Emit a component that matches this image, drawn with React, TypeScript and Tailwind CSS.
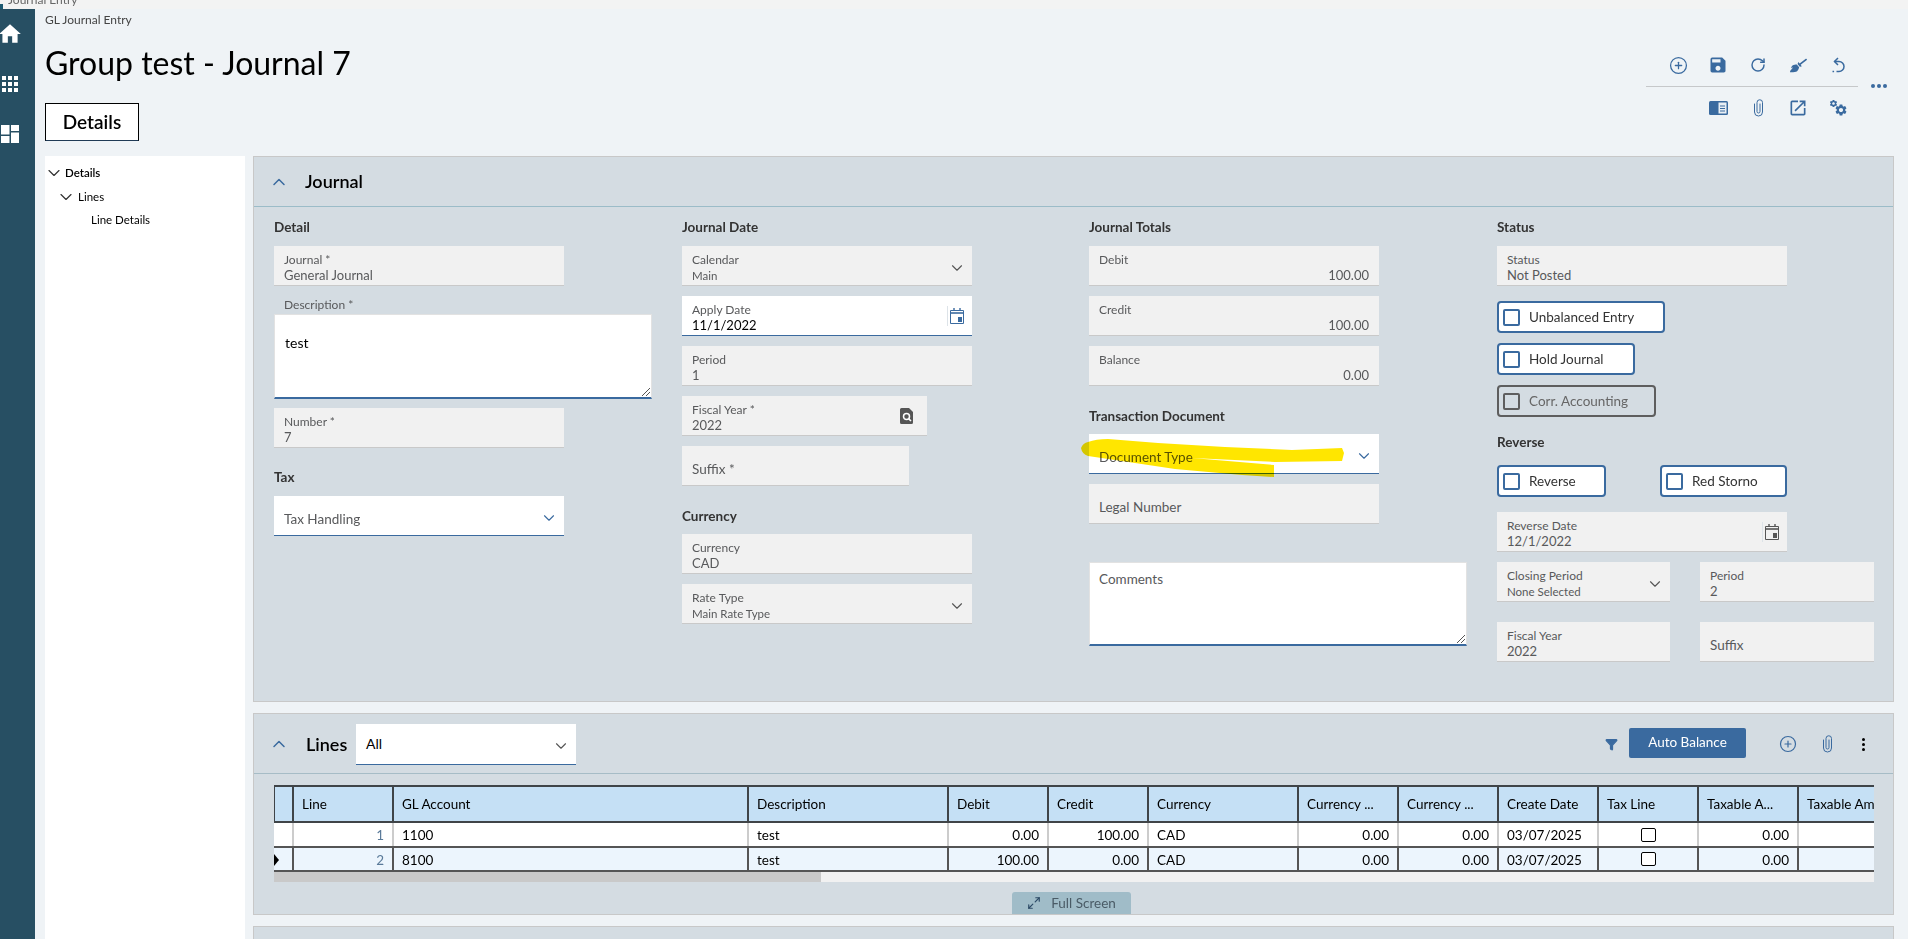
import React from "react";
import { ChevronDown, ChevronUp, CirclePlus, Filter, RotateCw, Maximize2 } from "lucide-react";
import { MdHome, MdSave, MdOpenInNew, MdSettings } from "react-icons/md";
import { FaBroom } from "react-icons/fa";

const BLUE = "#3a6a9f";

const Clip = ({ className = "" }: { className?: string }) => (
  <svg viewBox="0 0 10 18" className={className} fill="none" stroke={BLUE} strokeWidth="1" strokeLinecap="round">
    <path d="M6.5 5v7.5a1.5 1.5 0 0 1-3 0v-9a2.75 2.75 0 0 1 5.5 0V13a4 4 0 0 1-8 0V5" />
  </svg>
);

const Calendar = ({ color }: { color: string }) => (
  <svg viewBox="0 0 14 16" className="w-[14px] h-[16px]" fill="none" stroke={color}>
    <path d="M.5 2.5h13v13H.5z" strokeWidth="1" />
    <path d="M0 5h14" strokeWidth="1.6" />
    <path d="M4 0v3M10 0v3" strokeWidth="1.4" />
    <rect x="8" y="9" width="4" height="5" fill={color} stroke="none" />
  </svg>
);

const Field = ({
  label,
  value,
  width = "w-[290px]",
  active,
  chevron,
  right,
  numeric,
  small,
  children,
}: {
  label: string;
  value?: string;
  width?: string;
  active?: boolean;
  chevron?: boolean;
  right?: React.ReactNode;
  numeric?: boolean;
  small?: boolean;
  children?: React.ReactNode;
}) => (
  <div
    className={`relative h-[40px] shrink-0 px-[10px] ${width} ${
      active ? "bg-white border-b border-[#3a6a9f]" : "bg-[#f1f1f1] border-b border-[#c9c9c9]"
    }`}
  >
    {value !== undefined ? (
      <>
        <div className="text-[12px] leading-[14px] pt-[7px] box-content text-[#58595b]">{label}</div>
        <div
          className={`${small ? "text-[11.5px] mt-[1px]" : "text-[13px]"} leading-[16px] ${
            active ? "text-black" : "text-[#58595b]"
          } ${numeric ? "text-right" : ""}`}
        >
          {value}
        </div>
      </>
    ) : (
      <div className="flex h-full items-center pt-[8px] text-[13.5px] text-[#58595b]">{label}</div>
    )}
    {chevron && (
      <ChevronDown
        size={18}
        strokeWidth={1.5}
        color={active ? BLUE : "#555"}
        className="absolute right-[6px] top-[13px]"
      />
    )}
    {right}
    {children}
  </div>
);

const Heading = ({ children }: { children: React.ReactNode }) => (
  <div className="text-[13.5px] leading-[18px] font-bold text-[#333] h-[18px]">{children}</div>
);

const Check = ({ label, width, disabled }: { label: string; width: string; disabled?: boolean }) => (
  <div
    className={`h-[32px] ${width} shrink-0 flex items-center gap-[9px] pl-[4px] rounded-[4px] border-2 ${
      disabled ? "border-[#5e5e5e] bg-[#d4dce2] text-[#666]" : "border-[#3a6a9f] bg-white text-[#333]"
    }`}
  >
    <div
      className={`w-[17px] h-[17px] rounded-[2px] border-2 ${disabled ? "border-[#5e5e5e]" : "border-[#3a6a9f]"}`}
    />
    <span className="text-[13.5px] pt-[1px]">{label}</span>
  </div>
);

const gridCols =
  "grid grid-cols-[20px_100px_355px_200px_100px_100px_150px_100px_100px_100px_100px_100px_100px]";

const headers = [
  "",
  "Line",
  "GL Account",
  "Description",
  "Debit",
  "Credit",
  "Currency",
  "Currency ...",
  "Currency ...",
  "Create Date",
  "Tax Line",
  "Taxable A...",
  "Taxable Amount",
];

const rows = [
  { line: "1", account: "1100", debit: "0.00", credit: "100.00" },
  { line: "2", account: "8100", debit: "100.00", credit: "0.00" },
];

const Row = ({ r, selected }: { r: (typeof rows)[number]; selected: boolean }) => {
  const cell = `flex items-center px-[8px] pt-[2px] text-[13.5px] text-black whitespace-nowrap overflow-hidden border-r-2 ${
    selected ? "h-[22px] border-[#555]" : "h-[23px] border-[#ccc]"
  }`;
  return (
    <div className={`${gridCols} ${selected ? "bg-[#ecf5fd]" : "bg-white"}`}>
      <div className={`${cell} !px-0 ${selected ? "border-[#333]" : ""}`}>
        {selected && <div className="w-0 h-0 border-y-[6px] border-y-transparent border-l-[5px] border-l-black" />}
      </div>
      <div className={`${cell} justify-end !text-[#5a7a99]`}>{r.line}</div>
      <div className={cell}>{r.account}</div>
      <div className={cell}>test</div>
      <div className={`${cell} justify-end`}>{r.debit}</div>
      <div className={`${cell} justify-end`}>{r.credit}</div>
      <div className={cell}>CAD</div>
      <div className={`${cell} justify-end`}>0.00</div>
      <div className={`${cell} justify-end`}>0.00</div>
      <div className={cell}>03/07/2025</div>
      <div className={`${cell} justify-center !pt-0`}>
        <div className="w-[15px] h-[14px] border-[1.5px] border-black rounded-[2px] bg-white" />
      </div>
      <div className={`${cell} justify-end`}>0.00</div>
      <div className={cell}></div>
    </div>
  );
};

const App = () => {
  return (
    <div className="w-[1908px] h-[939px] overflow-hidden flex flex-col bg-[#eff3f6] font-['Lato',sans-serif]">
      {/* browser tab strip, cut off at the top */}
      <div className="h-[9px] shrink-0 bg-[#f3f3f3] overflow-hidden relative">
        <div className="absolute left-0 top-[4px] w-[3px] h-[5px] bg-[#1d5a72]" />
        <div className="absolute left-[8px] top-[-8px] text-[12px] leading-[16px] text-[#666]">Journal Entry</div>
      </div>

      <div className="flex flex-1 min-h-0">
        {/* side rail */}
        <div className="w-[35px] shrink-0 bg-[#274f63] overflow-hidden">
          <MdHome size={26} color="#fff" className="ml-[-3px] mt-[12px]" />
          <div className="grid grid-cols-3 gap-[2px] w-[16px] ml-[2px] mt-[29px]">
            {Array.from({ length: 9 }).map((_, i) => (
              <div key={i} className="w-[4px] h-[4px] bg-white" />
            ))}
          </div>
          <svg viewBox="0 0 18 18" className="w-[18px] h-[18px] ml-[1px] mt-[33px]" fill="#fff">
            <rect x="0" y="0" width="8.5" height="9.5" />
            <rect x="10" y="0" width="8" height="6" />
            <rect x="0" y="11" width="8.5" height="7" />
            <rect x="10" y="7.5" width="8" height="10.5" />
          </svg>
        </div>

        <div className="flex-1 min-w-0 pl-[10px] flex flex-col">
          {/* page header */}
          <div className="h-[147px] shrink-0 flex justify-between">
            <div>
              <div className="text-[12px] leading-[16px] text-[#444] mt-[3px]">GL Journal Entry</div>
              <div className="text-[32px] leading-[40px] text-black mt-[15px]">Group test - Journal 7</div>
              <div className="mt-[20px] w-[94px] h-[38px] flex items-center justify-center border border-black border-b-[#1f3a55] bg-white text-[19px] font-semibold text-black">
                Details
              </div>
            </div>
            <div className="flex pr-[21px] items-start">
              <div className="w-[212px] mt-[39px]">
                <div className="grid grid-cols-[40px_40px_40px_40px_40px] justify-end justify-items-center items-center h-[38px] pb-[4px]">
                  <CirclePlus size={19} color={BLUE} strokeWidth={1.6} />
                  <MdSave size={20} color={BLUE} />
                  <RotateCw size={16} color={BLUE} strokeWidth={2.2} />
                  <FaBroom size={17} color={BLUE} />
                  <svg viewBox="0 0 14 17" className="w-[14px] h-[17px]" fill="none" stroke={BLUE} strokeWidth="1.5">
                    <path d="M7 1 3.5 4.5 7 8" />
                    <path d="M3.5 4.5H8a4.7 4.7 0 0 1 0 10H5.5" />
                    <path d="M1.5 14.5h1.6" />
                  </svg>
                </div>
                <div className="h-px bg-[#c6c8ca]" />
                <div className="grid grid-cols-[40px_40px_40px_40px] justify-end justify-items-center items-center h-[42px]">
                  <svg viewBox="0 0 19 14" className="w-[19px] h-[14px]">
                    <rect x="0" y="0" width="19" height="14" rx="1.5" fill={BLUE} />
                    <rect x="9.5" y="1.5" width="8" height="11" fill="#e8eef4" />
                    <path d="M11 5h5M11 7.5h5M11 10h5" stroke={BLUE} strokeWidth="1" />
                  </svg>
                  <Clip className="w-[11px] h-[18px]" />
                  <MdOpenInNew size={20} color={BLUE} />
                  <div className="relative w-[19px] h-[18px]">
                    <MdSettings size={9} color={BLUE} className="absolute left-0 top-0" />
                    <MdSettings size={14} color={BLUE} className="absolute right-0 bottom-0" />
                  </div>
                </div>
              </div>
              <div className="flex gap-[2px] mt-[75px] ml-[13px]">
                <div className="w-[4px] h-[4px] rounded-full bg-[#3a6a9f]" />
                <div className="w-[4px] h-[4px] rounded-full bg-[#3a6a9f]" />
                <div className="w-[4px] h-[4px] rounded-full bg-[#3a6a9f]" />
              </div>
            </div>
          </div>

          <div className="flex-1 min-h-0 flex gap-[8px]">
            {/* tree */}
            <div className="w-[200px] shrink-0 bg-white pt-[9px] text-[11.5px] text-black">
              <div className="flex items-center h-[16px] -ml-[1px] gap-[1px] font-semibold">
                <ChevronDown size={20} strokeWidth={1.4} color="#333" />
                Details
              </div>
              <div className="flex items-center h-[16px] pl-[11px] gap-[2px] mt-[8px]">
                <ChevronDown size={20} strokeWidth={1.4} color="#333" />
                Lines
              </div>
              <div className="pl-[46px] mt-[7px] leading-[16px]">Line Details</div>
            </div>

            <div className="w-[1641px] shrink-0 flex flex-col gap-[11px]">
              {/* Journal panel */}
              <section className="h-[546px] shrink-0 bg-[#d4dce2] border border-[#c8c8c8]">
                <div className="h-[50px] flex items-center border-b border-[#9bbcc8] pl-[15px] gap-[16px]">
                  <ChevronUp size={20} strokeWidth={1.8} color={BLUE} />
                  <span className="text-[18px] font-semibold text-black">Journal</span>
                </div>
                <div className="grid grid-cols-[408px_407px_408px_1fr] pl-[20px] pt-[11px]">
                  <div className="flex flex-col">
                    <Heading>Detail</Heading>
                    <div className="h-[10px]" />
                    <Field label="Journal *" value="General Journal" />
                    <div className="pl-[10px] mt-[11px] pt-[1px] h-[17px] text-[12px] leading-[14px] text-[#58595b]">Description *</div>
                    <div className="relative w-[378px] h-[85px] bg-white border-t border-x border-t-[#e2e2e2] border-x-[#e2e2e2] border-b-2 border-b-[#3a6a9f] px-[10px] pt-[20px] text-[14px] leading-[16px] text-black">
                      test
                      <svg viewBox="0 0 8 8" className="absolute right-[1px] bottom-[1px] w-[8px] h-[8px]" stroke="#555">
                        <path d="M0 8 8 0M4 8l4-4" />
                      </svg>
                    </div>
                    <div className="h-[9px]" />
                    <Field label="Number *" value="7" />
                    <div className="h-[20px]" />
                    <Heading>Tax</Heading>
                    <div className="h-[10px]" />
                    <Field label="Tax Handling" active chevron />
                  </div>

                  <div className="flex flex-col gap-[10px]">
                    <Heading>Journal Date</Heading>
                    <Field label="Calendar" value="Main" chevron small />
                    <Field
                      label="Apply Date"
                      value="11/1/2022"
                      active
                      right={
                        <div className="absolute right-[8px] top-[10px] h-[20px] flex items-center border-l border-[#dde3e8] pl-[2px]">
                          <Calendar color={BLUE} />
                        </div>
                      }
                    />
                    <Field label="Period" value="1" />
                    <Field
                      label="Fiscal Year *"
                      value="2022"
                      width="w-[245px]"
                      right={
                        <svg viewBox="0 0 13 16" className="absolute right-[14px] top-[12px] w-[13px] h-[16px]">
                          <path d="M1.5 0H9l4 4v10.5a1.5 1.5 0 0 1-1.5 1.5h-10A1.5 1.5 0 0 1 0 14.5v-13A1.5 1.5 0 0 1 1.5 0Z" fill="#555" />
                          <circle cx="6.5" cy="8.5" r="3" fill="none" stroke="#fff" strokeWidth="1.5" />
                          <path d="m8.6 10.6 2.4 2.4" stroke="#fff" strokeWidth="1.5" />
                        </svg>
                      }
                    />
                    <Field label="Suffix *" width="w-[227px]" />
                    <div className="mt-[11px] -mb-[1px]">
                      <Heading>Currency</Heading>
                    </div>
                    <Field label="Currency" value="CAD" />
                    <Field label="Rate Type" value="Main Rate Type" chevron small />
                  </div>

                  <div className="flex flex-col">
                    <Heading>Journal Totals</Heading>
                    <div className="flex flex-col gap-[10px] mt-[10px]">
                      <Field label="Debit" value="100.00" numeric />
                      <Field label="Credit" value="100.00" numeric />
                      <Field label="Balance" value="0.00" numeric />
                    </div>
                    <div className="mt-[21px] mb-[9px]">
                      <Heading>Transaction Document</Heading>
                    </div>
                    <Field label="Document Type" active chevron>
                      {/* yellow marker scribble over the field */}
                      <svg
                        viewBox="0 0 270 50"
                        className="absolute left-[-8px] top-[4px] w-[270px] h-[50px] mix-blend-multiply pointer-events-none"
                      >
                        <path
                          d="M0 10Q2 5 7 4Q15 1 27 1L77 5L144 9L211 12L261 10L263 15L261 23L194 24L111 20L193 27L193 39L161 37L94 31L34 22L7 18Q1 16 0 10Z"
                          fill="#ffe600"
                        />
                      </svg>
                    </Field>
                    <div className="h-[10px]" />
                    <Field label="Legal Number" />
                    <div className="h-[38px]" />
                    <div className="relative w-[378px] h-[84px] bg-white border-t border-x border-t-[#e2e2e2] border-x-[#e2e2e2] border-b-2 border-b-[#3a6a9f] px-[9px] pt-[8px] text-[13.5px] leading-[16px] text-[#58595b]">
                      Comments
                      <svg viewBox="0 0 8 8" className="absolute right-[1px] bottom-[1px] w-[8px] h-[8px]" stroke="#555">
                        <path d="M0 8 8 0M4 8l4-4" />
                      </svg>
                    </div>
                  </div>

                  <div className="flex flex-col">
                    <Heading>Status</Heading>
                    <div className="h-[10px]" />
                    <Field label="Status" value="Not Posted" />
                    <div className="flex flex-col gap-[10px] mt-[15px]">
                      <Check label="Unbalanced Entry" width="w-[168px]" />
                      <Check label="Hold Journal" width="w-[138px]" />
                      <Check label="Corr. Accounting" width="w-[159px]" disabled />
                    </div>
                    <div className="mt-[16px] mb-[14px]">
                      <Heading>Reverse</Heading>
                    </div>
                    <div className="flex gap-[54px]">
                      <Check label="Reverse" width="w-[109px]" />
                      <Check label="Red Storno" width="w-[127px]" />
                    </div>
                    <div className="h-[15px]" />
                    <Field
                      label="Reverse Date"
                      value="12/1/2022"
                      right={
                        <div className="absolute right-[8px] top-[10px] h-[20px] flex items-center border-l border-[#dde3e8] pl-[2px]">
                          <Calendar color="#555" />
                        </div>
                      }
                    />
                    <div className="grid grid-cols-[203px_174px] gap-y-[20px] mt-[10px]">
                      <Field label="Closing Period" value="None Selected" width="w-[173px]" chevron small />
                      <Field label="Period" value="2" width="w-[174px]" />
                      <Field label="Fiscal Year" value="2022" width="w-[173px]" />
                      <Field label="Suffix" width="w-[174px]" />
                    </div>
                  </div>
                </div>
              </section>

              {/* Lines panel */}
              <section className="h-[202px] shrink-0 bg-[#d4dce2] border border-[#c8c8c8] flex flex-col">
                <div className="h-[60px] shrink-0 flex items-center border-b border-[#a6bcc6] pl-[15px] pr-[28px] pt-[1px]">
                  <ChevronUp size={20} strokeWidth={1.8} color={BLUE} />
                  <span className="w-[41px] text-[18px] font-semibold text-black ml-[17px]">Lines</span>
                  <div className="relative w-[220px] h-[41px] ml-[9px] bg-white border-b border-[#3a6a9f] flex items-center pl-[10px] text-[14px] text-black">
                    All
                    <ChevronDown size={18} strokeWidth={1.5} color="#555" className="absolute right-[6px] top-[13px]" />
                  </div>
                  <div className="flex-1" />
                  <Filter size={13} color={BLUE} fill={BLUE} className="mr-[11px]" />
                  <div className="w-[117px] h-[30px] mb-[3px] rounded-[2px] bg-[#3a6a9f] text-white text-[13.5px] flex items-center justify-center">
                    Auto Balance
                  </div>
                  <CirclePlus size={18} color={BLUE} strokeWidth={1.6} className="ml-[33px]" />
                  <Clip className="w-[11px] h-[18px] ml-[25px]" />
                  <div className="flex flex-col gap-[2px] ml-[29px]">
                    <div className="w-[3px] h-[3px] rounded-full bg-black" />
                    <div className="w-[3px] h-[3px] rounded-full bg-black" />
                    <div className="w-[3px] h-[3px] rounded-full bg-black" />
                  </div>
                </div>

                <div className="mx-[20px] mt-[11px] w-[1600px] overflow-hidden">
                  <div className="w-[1675px]">
                    <div className={`${gridCols} h-[38px] bg-[#c5e0f5] border-t-2 border-b-2 border-[#3f4448]`}>
                      {headers.map((h, i) => (
                        <div
                          key={i}
                          className={`flex items-center px-[8px] pt-[1px] text-[13.5px] text-black whitespace-nowrap overflow-hidden ${
                            i < 12 ? "border-r-2 border-[#3f4448]" : ""
                          } ${i === 0 ? "border-l border-l-[#3f4448]" : ""}`}
                        >
                          {h}
                        </div>
                      ))}
                    </div>
                    <Row r={rows[0]} selected={false} />
                    <div className="h-[2px] bg-[#555]" />
                    <Row r={rows[1]} selected />
                    <div className="h-[2px] bg-[#555]" />
                  </div>
                  <div className="h-[10px] bg-[#f1f1f1] flex">
                    <div className="w-[547px] bg-[#c9c9c9]" />
                  </div>
                </div>

                <div className="flex-1 flex justify-center items-end pr-[4px]">
                  <div className="w-[119px] h-[22px] rounded-t-[3px] bg-[#a0bcc8] flex items-center justify-center gap-[10px] text-[13.5px] text-[#4a5b66]">
                    <Maximize2 size={14} color="#2c4a66" />
                    Full Screen
                  </div>
                </div>
              </section>

              <section className="h-[40px] shrink-0 bg-[#d4dce2] border border-[#c8c8c8]" />
            </div>
          </div>
        </div>
      </div>
    </div>
  );
};

export default App;
